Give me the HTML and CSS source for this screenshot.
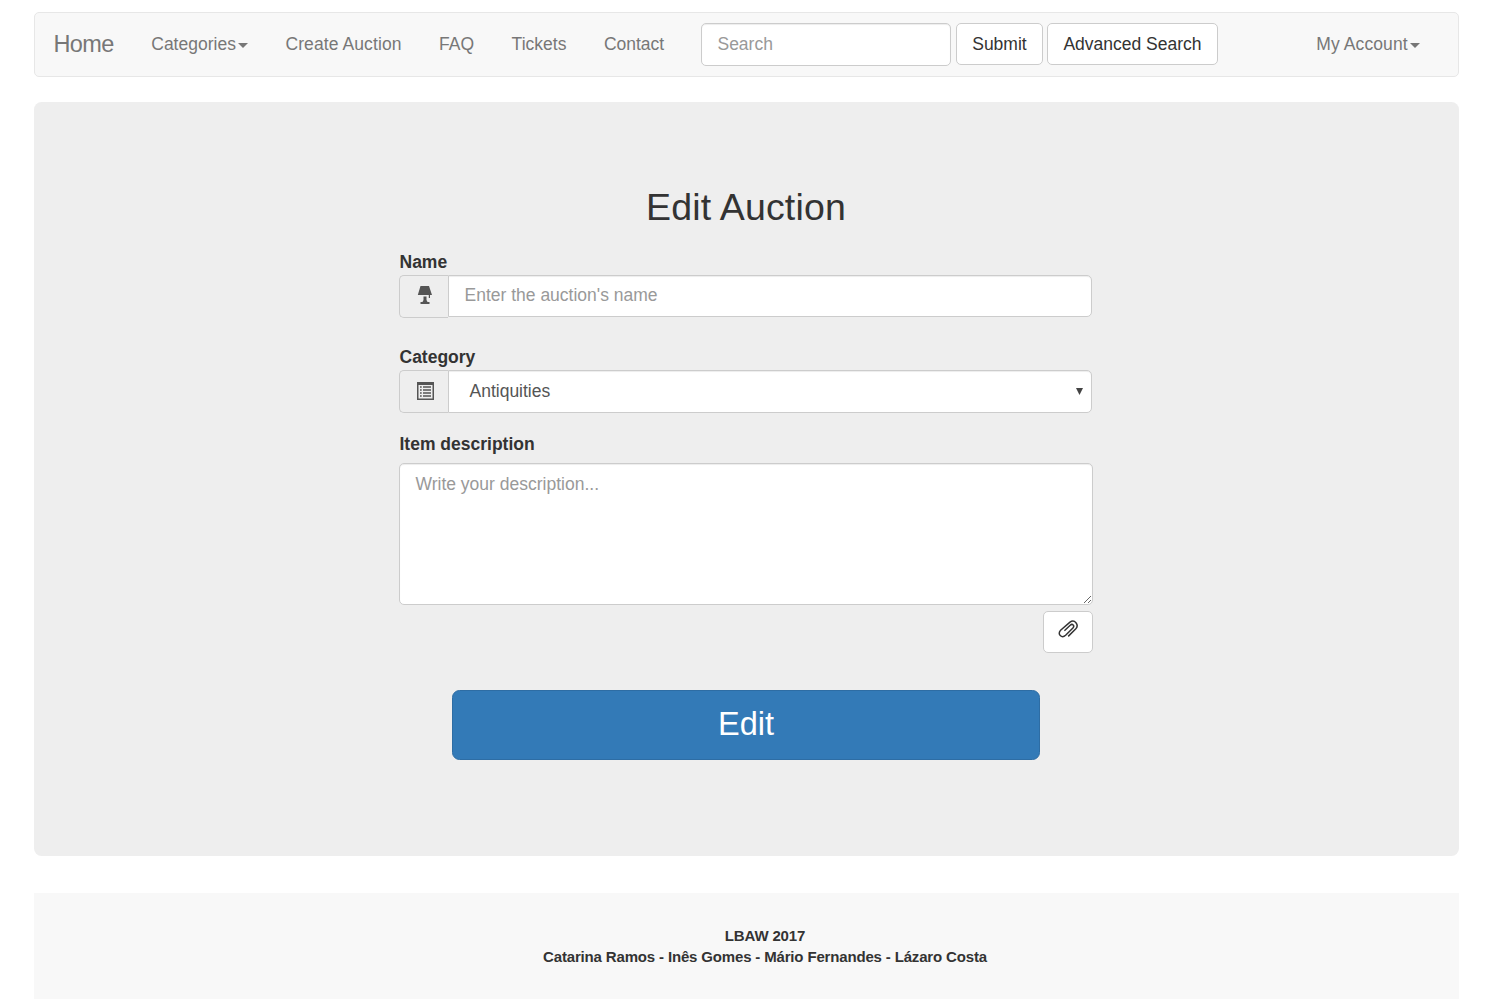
FILE: index.html
```html
<!DOCTYPE html>
<html lang="en">
<head>
<meta charset="utf-8">
<title>Edit Auction</title>
<link rel="stylesheet" href="styles.css">
</head>
<body>
<nav class="navbar">
  <a class="brand">Home</a>
  <a class="nav-link">Categories<span class="caret"></span></a>
  <a class="nav-link create">Create Auction</a>
  <a class="nav-link">FAQ</a>
  <a class="nav-link">Tickets</a>
  <a class="nav-link">Contact</a>
  <form class="search">
    <input class="control search-input" type="text" placeholder="Search">
    <button class="btn submit" type="button">Submit</button>
    <button class="btn advanced" type="button">Advanced Search</button>
  </form>
  <a class="nav-link account">My Account<span class="caret"></span></a>
</nav>
<main class="jumbotron">
  <form class="edit-form">
    <h1 class="title">Edit Auction</h1>
    <label class="label" for="name">Name</label>
    <div class="group group-name">
      <span class="addon">
        <svg class="lamp" width="16" height="19" viewBox="0 0 16 19"><path d="M3.500 0h8.500L15 9h-2v3h-1.200V9H.800zM6.500 10.500h3V14l1 2h2v2h-9v-2h2l1-2z"/></svg>
      </span>
      <input class="control name-input" id="name" type="text" placeholder="Enter the auction's name">
    </div>
    <label class="label" for="category">Category</label>
    <div class="group group-category">
      <span class="addon">
        <svg class="list" width="17" height="18" viewBox="0 0 17 18"><path fill-rule="evenodd" d="M0 0h17v18H0zM1.500 3v13.500h14V3zM3 4.300h1.700v1.400H3zM6 4.300h8v1.400H6zM3 7.300h1.700v1.400H3zM6 7.300h8v1.400H6zM3 10.300h1.700v1.400H3zM6 10.300h8v1.400H6zM3 13.300h1.700v1.400H3zM6 13.300h8v1.400H6z"/></svg>
      </span>
      <div class="control select" id="category"><span>Antiquities</span><svg width="7" height="7" viewBox="0 0 7 7"><path d="M0 0h7L3.500 7z"/></svg></div>
    </div>
    <label class="label label-description" for="description">Item description</label>
    <textarea class="control description" id="description" placeholder="Write your description..."></textarea>
    <button class="btn attach" type="button" aria-label="Attach file">
      <svg width="20" height="18" viewBox="0 0 20 18" fill="none" stroke="#333" stroke-width="1.500"><path d="M10.200 16.400 17.600 9C21.600 4.800 16.400-1.200 12 2.200L2.600 10.300C-1.200 14.200 3.800 18.800 7.600 15.300L14.900 8C17 5.500 14.400 3.300 12.200 5.200L6.400 10.700"/></svg>
    </button>
    <button class="btn-primary" type="button">Edit</button>
  </form>
</main>
<footer class="footer">
  <div>LBAW 2017</div>
  <div>Catarina Ramos - Inês Gomes - Mário Fernandes - Lázaro Costa</div>
</footer>
</body>
</html>
```
FILE: styles.css
```css
* { box-sizing: border-box; }
html { overflow: hidden; }
body {
  margin: 0;
  padding: 12px 39px 0 34px;
  font: 17.5px/25px "Liberation Sans", Arial, sans-serif;
  color: #333;
  background: #fff;
}
input, button, textarea { margin: 0; font: inherit; }
.navbar {
  display: flex;
  align-items: flex-start;
  height: 65px;
  padding-right: 19px;
  background: #f8f8f8;
  border: 1px solid #e7e7e7;
  border-radius: 5px;
  color: #777;
}
.brand {
  width: 97.5px;
  padding: 19px 0 0 18.5px;
  font-size: 23.5px;
  letter-spacing: -.65px;
}
.nav-link { padding: 18.75px; white-space: nowrap; }
.create { padding-left: 18.25px; letter-spacing: .1px; }
.caret {
  display: inline-block;
  margin-left: 2.5px;
  vertical-align: middle;
  border: 5px solid transparent;
  border-top-color: #777;
  border-bottom: 0;
}
.search { display: flex; align-items: flex-start; margin: 10px 0 0 18px; }
.control {
  height: 43px;
  padding: 7.500px 15.500px;
  color: #555;
  background: #fff;
  border: 1px solid #ccc;
  border-radius: 5px;
  box-shadow: inset 0 1px 1px rgba(0, 0, 0, .075);
  outline: 0;
}
.control::placeholder { color: #999; opacity: 1; }
.search-input { width: 250px; }
.btn {
  height: 42px;
  padding: 0;
  color: #333;
  background: #fff;
  border: 1px solid #ccc;
  border-radius: 5px;
}
.submit { width: 87px; margin-left: 5px; }
.advanced { width: 171px; margin-left: 4px; }
.account { margin-left: auto; letter-spacing: .1px; }
.jumbotron {
  height: 754px;
  margin-top: 25px;
  padding-top: 85px;
  background: #eee;
  border-radius: 7.5px;
}
.edit-form { display: flex; flex-direction: column; width: 694px; margin-left: 365px; }
.title {
  margin: 0 0 21px;
  font-size: 37.5px;
  font-weight: 500;
  line-height: 41px;
  letter-spacing: .15px;
  text-align: center;
}
.label { padding-left: .5px; font-weight: bold; line-height: 26px; }
.group { display: flex; align-items: flex-start; width: 693px; height: 43px; }
.group-name { margin-bottom: 26px; }
.addon {
  display: flex;
  flex: none;
  align-items: center;
  justify-content: center;
  width: 49px;
  height: 43px;
  padding-left: 2px;
  background: #eee;
  border: 1px solid #ccc;
  border-right: 0;
  border-radius: 5px 0 0 5px;
  fill: #555;
}
.lamp { margin-top: -2px; }
.list { margin-bottom: 1px; }
.group .control { flex: 1; border-radius: 0 5px 5px 0; }
.group .name-input { height: 42px; padding-top: 6px; padding-bottom: 8px; }
.select {
  display: flex;
  align-items: center;
  justify-content: space-between;
  padding: 0 8px 0 20.5px;
}
.select svg { fill: #444; }
.label-description { margin-top: 18px; }
.description { display: block; width: 694px; height: 142px; margin-top: 6px; resize: vertical; }
.attach {
  display: flex;
  align-items: center;
  justify-content: center;
  align-self: flex-end;
  width: 50px;
  margin-top: 6px;
  padding: 0 0 6px;
}
.btn-primary {
  width: 588px;
  height: 70px;
  margin: 37px auto 0 53px;
  padding: 0 0 2px;
  font-size: 32.5px;
  color: #fff;
  background: #337ab7;
  border: 1px solid #2e6da4;
  border-radius: 7.5px;
}
.footer {
  height: 106px;
  margin-top: 37px;
  padding: 32px 0 0 37px;
  background: #f8f8f8;
  font-size: 15px;
  font-weight: bold;
  line-height: 21px;
  letter-spacing: -.16px;
  text-align: center;
}
```
